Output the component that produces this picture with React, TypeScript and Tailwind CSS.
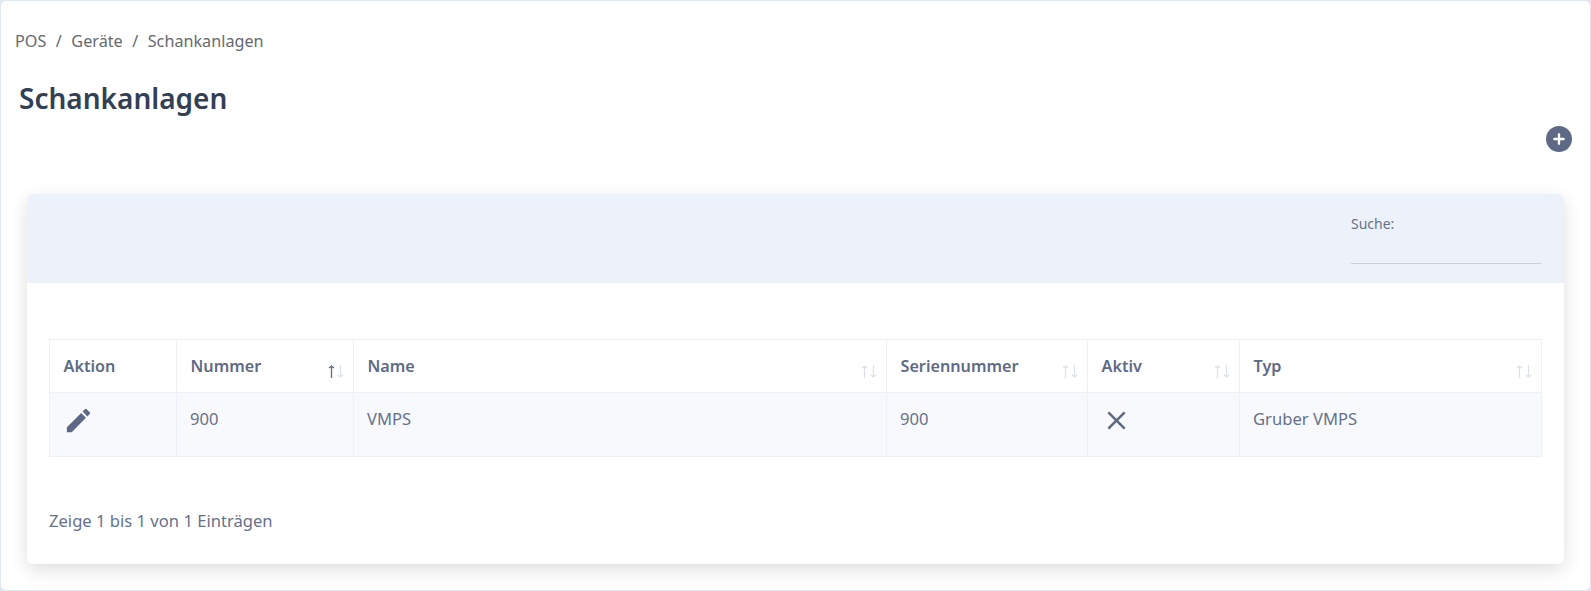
import { Plus } from "lucide-react"
import { MdClose, MdEdit } from "react-icons/md"

const columns = [
  { label: "Aktion", width: "w-[127px]", sort: false },
  { label: "Nummer", width: "w-[177px]", sort: true, active: true },
  { label: "Name", width: "w-[533px]", sort: true },
  { label: "Seriennummer", width: "w-[201px]", sort: true },
  { label: "Aktiv", width: "w-[152px]", sort: true },
  { label: "Typ", width: "", sort: true },
]

const SortArrows = ({ active }: { active?: boolean }) => (
  <span className="absolute right-[8px] top-[25px] flex">
    <svg width="9" height="13" viewBox="0 0 9 13" fill="none" stroke={active ? "#5f6b85" : "#dde1e9"} strokeWidth="1.3">
      <path d="M4.5 13V1M2 3 4.5 1 7 3" />
    </svg>
    <svg width="9" height="13" viewBox="0 0 9 13" fill="none" stroke="#dde1e9" strokeWidth="1.3">
      <path d="M4.5 0v12M2 10l2.5 2L7 10" />
    </svg>
  </span>
)

export default () => {
  return (
    <div className="h-[591px] bg-[#e3e7f0] font-['Noto_Sans',sans-serif] text-[#667189]">
      <div className="h-[590px] ml-px mr-px pt-px">
        <div className="h-[589px] rounded-[5px] bg-white overflow-hidden">
          <div className="pt-[28px] pl-[14px] flex gap-[9.5px] text-[16.2px] leading-[24px] text-[#66696e]">
            <span>POS</span><span>/</span><span>Geräte</span><span>/</span><span>Schankanlagen</span>
          </div>
          <h1 className="mt-[25px] pl-[18px] text-[28px] leading-[40px] font-semibold text-[#333f54]">Schankanlagen</h1>
          <div className="mt-[8px] pr-[18px] flex justify-end">
            <div className="w-[26px] h-[26px] rounded-full bg-[#5e6a85] flex items-center justify-center">
              <Plus size={16} strokeWidth={3.5} className="text-white" />
            </div>
          </div>
          <div className="mt-[42px] mx-[26px] rounded-[6px] bg-white shadow-[0_6px_18px_rgba(0,0,0,0.13)] h-[370px]">
            <div className="h-[89px] rounded-t-[6px] bg-[#edf1f9] flex justify-end pr-[23px] pt-[20px]">
              <div className="w-[190px] h-[50px] border-b border-[#cdd0d6] text-[14px] leading-[20px]">Suche:</div>
            </div>
            <div className="px-[22px] pt-[56px]">
              <table className="w-full table-fixed border-collapse">
                <thead>
                  <tr className="h-[53px]">
                    {columns.map((c) => (
                      <th key={c.label} className={`${c.width} relative border border-[#edf0f6] pl-[13.5px] text-left text-[16.2px] font-semibold text-[#5e6a85]`}>
                        {c.label}
                        {c.sort && <SortArrows active={c.active} />}
                      </th>
                    ))}
                  </tr>
                </thead>
                <tbody>
                  <tr className="h-[64px] bg-[#f8f9fd] text-[16.6px]">
                    <td className="border border-[#edf0f6] pl-[13px] pb-[8px]">
                      <MdEdit size={31} className="text-[#5e6a85]" />
                    </td>
                    <td className="border border-[#edf0f6] pl-[13px] pb-[10px]">900</td>
                    <td className="border border-[#edf0f6] pl-[13px] pb-[10px]">VMPS</td>
                    <td className="border border-[#edf0f6] pl-[13px] pb-[10px]">900</td>
                    <td className="border border-[#edf0f6] pl-[13px] pb-[8px]">
                      <MdClose size={31} className="text-[#5e6a85]" />
                    </td>
                    <td className="border border-[#edf0f6] pl-[13px] pb-[10px]">Gruber VMPS</td>
                  </tr>
                </tbody>
              </table>
              <p className="mt-[52px] text-[16.6px] leading-[24px]">Zeige 1 bis 1 von 1 Einträgen</p>
            </div>
          </div>
        </div>
      </div>
    </div>
  )
}
